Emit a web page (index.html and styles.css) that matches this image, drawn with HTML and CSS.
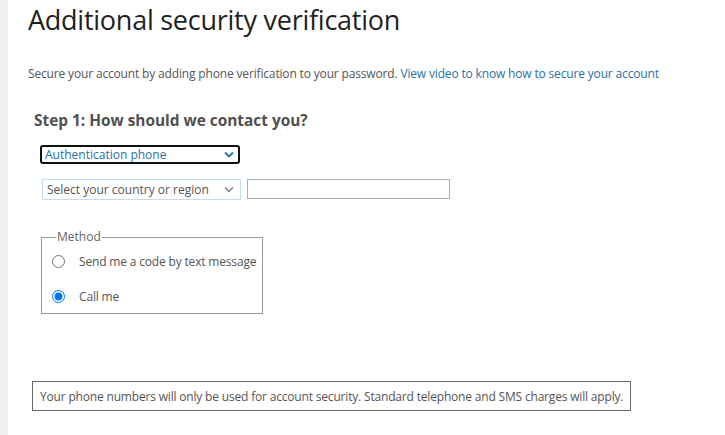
FILE: index.html
```html
<!DOCTYPE html>
<html>
<head>
<meta charset="utf-8">
<link rel="stylesheet" href="styles.css">
</head>
<body>
<div class="page">
  <div class="strip"></div>
  <main class="main">
    <h1 class="title">Additional security verification</h1>
    <p class="intro">Secure your account by adding phone verification to your password. <a class="link" href="#">View video to know how to secure your account</a></p>
    <section class="step">
      <h2 class="step-title">Step 1: How should we contact you?</h2>
      <div class="select select-auth">
        <span class="select-text">Authentication phone</span>
        <svg class="chev chev-blue" width="10" height="7" viewBox="0 0 10 7"><path d="M1 1.5 L5 5.5 L9 1.5" fill="none" stroke="currentColor" stroke-width="1.8"/></svg>
      </div>
      <div class="phone-row">
        <div class="select select-country">
          <span class="select-text">Select your country or region</span>
          <svg class="chev chev-gray" width="10" height="7" viewBox="0 0 10 7"><path d="M1 1.5 L5 5.5 L9 1.5" fill="none" stroke="currentColor" stroke-width="1.3"/></svg>
        </div>
        <div class="phone-input"></div>
      </div>
      <fieldset class="method">
        <legend class="legend">Method</legend>
        <label class="option">
          <input class="radio" type="radio" name="method">
          <span class="option-text">Send me a code by text message</span>
        </label>
        <label class="option">
          <input class="radio" type="radio" name="method" checked>
          <span class="option-text">Call me</span>
        </label>
      </fieldset>
    </section>
    <div class="notice">Your phone numbers will only be used for account security. Standard telephone and SMS charges will apply.</div>
  </main>
</div>
</body>
</html>
```
FILE: styles.css
```css
html, body {
  margin: 0;
  padding: 0;
  background: #ffffff;
}
body {
  font-family: "Open Sans", "Noto Sans", sans-serif;
  color: #505050;
}
.page {
  display: flex;
  min-height: 435px;
}
.strip {
  width: 8px;
  background: #efefef;
  flex: none;
}
.main {
  padding-left: 20px;
  flex: 1;
}
.title {
  margin: 0;
  padding-top: 3px;
  font-size: 27px;
  font-weight: 400;
  line-height: 34px;
  color: #1f1f1f;
  letter-spacing: -0.25px;
}
.intro {
  margin: 29px 0 0 0;
  font-size: 12px;
  line-height: 16px;
  color: #555555;
  letter-spacing: -0.16px;
}
.link {
  color: #2a6fa8;
  text-decoration: none;
}
.step {
  padding-left: 6px;
  margin-top: 29px;
}
.step-title {
  margin: 0;
  font-size: 15.4px;
  font-weight: 700;
  line-height: 20px;
  color: #505050;
}
.select {
  display: flex;
  align-items: center;
  justify-content: space-between;
  box-sizing: border-box;
  font-size: 12px;
}
.select-auth {
  margin-top: 14px;
  margin-left: 6px;
  width: 200px;
  height: 19px;
  border: 2px solid #111111;
  border-radius: 3px;
  padding: 0 4px 0 3px;
  color: #2a6fa8;
}
.chev-blue { color: #2a6fa8; }
.chev-gray { color: #777777; }
.phone-row {
  display: flex;
  gap: 6px;
  margin-top: 15px;
  margin-left: 8px;
}
.select-country {
  width: 199px;
  height: 21px;
  border: 1px solid #c6dbee;
  padding: 0 6px 0 4px;
  color: #555555;
}
.phone-input {
  width: 203px;
  height: 20px;
  box-sizing: border-box;
  border: 1px solid #a2b0bd;
}
.method {
  margin: 31px 0 0 7px;
  width: 222px;
  box-sizing: border-box;
  border: 1px solid #999999;
  padding: 9px 0 8px 10px;
  height: 83px;
}
.legend {
  font-size: 12px;
  padding: 0 1px;
  margin-left: 4px;
  color: #666666;
  line-height: 12px;
}
.option {
  display: flex;
  align-items: center;
  height: 18px;
  margin-bottom: 17px;
  font-size: 12px;
  letter-spacing: -0.17px;
  color: #555555;
}
.option:last-child { margin-bottom: 0; }
.radio {
  width: 13px;
  height: 13px;
  margin: 0 14px 0 0;
  flex: none;
}
.notice {
  margin-top: 67px;
  margin-left: 4px;
  width: 599px;
  height: 30px;
  box-sizing: border-box;
  border: 1px solid #666666;
  padding: 0 0 0 7px;
  display: flex;
  align-items: center;
  font-size: 12px;
  letter-spacing: -0.18px;
  white-space: nowrap;
  color: #555555;
}
```
